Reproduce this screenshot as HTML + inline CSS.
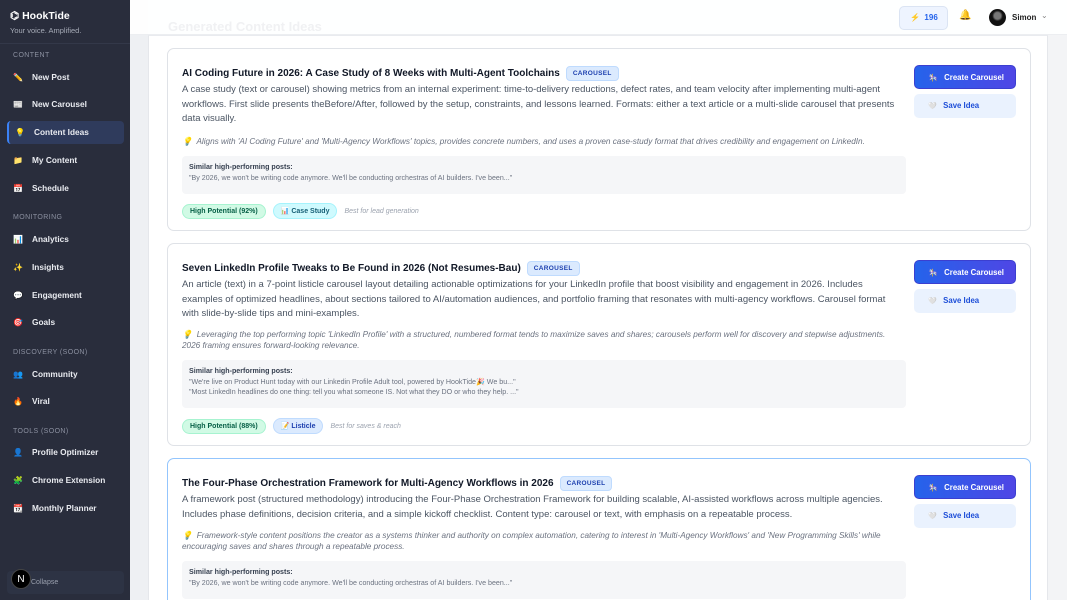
<!DOCTYPE html>
<html><head><meta charset="utf-8"><style>
*{box-sizing:border-box;margin:0;padding:0}
html,body{width:1067px;height:600px;overflow:hidden}
body{background:#f3f4f6;font-family:"Liberation Sans","Noto Sans CJK SC",sans-serif;position:relative}
#root{position:absolute;left:0;top:0;width:1067px;height:600px;overflow:hidden}
.sb{position:absolute;left:0;top:0;width:130px;height:600px;background:#292d3c;color:#e5e7eb}
.logo{position:absolute;left:10px;top:10px;font-weight:bold;font-size:10.5px;color:#fff}
.tag{position:absolute;left:10px;top:26px;font-size:7.5px;color:#a5aab6}
.sec{position:absolute;left:13px;font-size:7px;color:#8b90a0;letter-spacing:.4px}
.it{position:absolute;left:7px;width:117px;height:23px;font-size:8.3px;font-weight:bold;color:#e9ebf0;line-height:23px;padding-left:6px;border-radius:4px}
.it i{font-style:normal;display:inline-block;width:19px;font-size:8px}
.it.act{background:#2f3b5c;border-left:2px solid #3b82f6}
.strip{position:absolute;left:130px;top:0;width:18px;height:600px;background:#eef0f3}
.main{position:absolute;left:148px;top:35px;width:900px;height:565px;background:#fff;border-left:1px solid #e5e7eb;border-top:1px solid #e9ebef;border-right:1px solid #e5e7eb}
.hdr{position:absolute;left:130px;top:0;width:937px;height:35px;background:rgba(255,255,255,.92);border-bottom:1px solid #eceef1}
.ghost{position:absolute;left:168px;top:19px;font-size:13px;font-weight:bold;color:#f0f1f3}
.card{position:absolute;left:167px;width:864px;background:#fff;border:1px solid #dfe2e7;border-radius:7px}
.card.sel{border-color:#93c5fd}
.t{position:absolute;left:14px;top:17px;font-size:10px;font-weight:bold;color:#111827;white-space:nowrap}
.pill{display:inline-block;margin-left:6px;background:#dbeafe;color:#1e40af;font-size:6.5px;font-weight:bold;padding:3px 6px;border-radius:4px;border:1px solid #bfdbfe;vertical-align:1px;letter-spacing:.3px}
.d{position:absolute;left:14px;top:34px;width:720px;font-size:9.5px;line-height:14.6px;color:#4b5563;white-space:nowrap}
.r{position:absolute;left:14px;width:722px;font-size:8.2px;line-height:11.3px;color:#6b7280;font-style:italic}
.sim{position:absolute;left:14px;width:724px;background:#f5f6f8;border-radius:4px;padding:6px 7px;font-size:7.1px;line-height:10.5px;color:#6b7280}
.sim b{color:#374151;display:block}
.bd{position:absolute;left:14px;font-size:7px;white-space:nowrap}
.b{display:inline-block;padding:3px 7px;border-radius:8px;font-weight:bold;margin-right:7px}
.g{background:#d1fae5;color:#065f46;border:1px solid #a7f3d0}
.c{background:#cffafe;color:#155e75;border:1px solid #a5f3fc}
.bl{background:#dbeafe;color:#1e40af;border:1px solid #bfdbfe}
.bd em{color:#9ca3af}
.btn{position:absolute;left:746px;width:102px;height:24px;border-radius:5px;font-size:7.8px;font-weight:bold;line-height:24px;padding-left:14px}
.btn i{font-style:normal;font-size:7px;display:inline-block;width:13px}
.p{background:linear-gradient(90deg,#2563eb,#4f46e5);color:#fff;top:16px;border:1px solid #3b3fd0}
.s{background:#eaf2fe;color:#1d4ed8;top:45px;padding-left:14px}
</style></head><body><div id="root">
<div class="strip"></div>
<div class="main"></div>
<div class="hdr"></div>
<div class="ghost">Generated Content Ideas</div>
<div style="position:absolute;left:899px;top:6px;width:49px;height:24px;border:1px solid #dbe4f3;background:#eef4ff;border-radius:5px;font-size:8px;font-weight:bold;color:#2563eb;line-height:22px;padding-left:10px"><span style="color:#f59e0b">⚡</span>&nbsp; 196</div>
<div style="position:absolute;left:959px;top:10px;font-size:10px;color:#e0a500">🔔</div>
<div style="position:absolute;left:989px;top:9px;width:17px;height:17px;border-radius:50%;background:radial-gradient(circle at 50% 40%,#777 0 25%,#111 40%)"></div>
<div style="position:absolute;left:1012px;top:13px;font-size:8px;font-weight:bold;color:#222">Simon</div>
<div style="position:absolute;left:1041px;top:11px;font-size:8px;color:#888">⌄</div>

<div class="sb">
<div class="logo">⌬ HookTide</div>
<div class="tag">Your voice. Amplified.</div>
<div style="position:absolute;left:0;top:43px;width:130px;border-top:1px solid #333849"></div>
<div class="sec" style="top:52px">CONTENT</div>
<div class="it" style="top:66px"><i>✏️</i>New Post</div>
<div class="it" style="top:93px"><i>📰</i>New Carousel</div>
<div class="it act" style="top:121px"><i>💡</i>Content Ideas</div>
<div class="it" style="top:149px"><i>📁</i>My Content</div>
<div class="it" style="top:177px"><i>📅</i>Schedule</div>
<div class="sec" style="top:214px">MONITORING</div>
<div class="it" style="top:228px"><i>📊</i>Analytics</div>
<div class="it" style="top:256px"><i>✨</i>Insights</div>
<div class="it" style="top:284px"><i>💬</i>Engagement</div>
<div class="it" style="top:311px"><i>🎯</i>Goals</div>
<div class="sec" style="top:349px">DISCOVERY (SOON)</div>
<div class="it" style="top:363px"><i>👥</i>Community</div>
<div class="it" style="top:390px"><i>🔥</i>Viral</div>
<div class="sec" style="top:428px">TOOLS (SOON)</div>
<div class="it" style="top:441px"><i>👤</i>Profile Optimizer</div>
<div class="it" style="top:469px"><i>🧩</i>Chrome Extension</div>
<div class="it" style="top:497px"><i>📆</i>Monthly Planner</div>
<div style="position:absolute;left:7px;top:571px;width:117px;height:23px;background:#2d3344;border-radius:4px;font-size:7px;color:#9aa0ae;line-height:23px;padding-left:24px">Collapse</div>
<div style="position:absolute;left:11px;top:569px;width:20px;height:20px;border-radius:50%;background:#000;color:#fff;font-size:10px;text-align:center;line-height:20px;border:1px solid #444">N</div>
</div>

<div class="card" style="top:48px;height:183px">
<div class="t">AI Coding Future in 2026: A Case Study of 8 Weeks with Multi-Agent Toolchains<span class="pill">CAROUSEL</span></div>
<div class="d">A case study (text or carousel) showing metrics from an internal experiment: time-to-delivery reductions, defect rates, and team velocity after implementing multi-agent<br>workflows. First slide presents theBefore/After, followed by the setup, constraints, and lessons learned. Formats: either a text article or a multi-slide carousel that presents<br>data visually.</div>
<div class="r" style="top:87px">💡&nbsp; Aligns with 'AI Coding Future' and 'Multi-Agency Workflows' topics, provides concrete numbers, and uses a proven case-study format that drives credibility and engagement on LinkedIn.</div>
<div class="sim" style="top:107px;height:38px"><b>Similar high-performing posts:</b>"By 2026, we won't be writing code anymore. We'll be conducting orchestras of AI builders. I've been..."</div>
<div class="bd" style="top:154px"><span class="b g">High Potential (92%)</span><span class="b c">📊 Case Study</span><em>Best for lead generation</em></div>
<div class="btn p"><i>🎠</i> Create Carousel</div><div class="btn s"><i>🤍</i> Save Idea</div>
</div>

<div class="card" style="top:243px;height:203px">
<div class="t">Seven LinkedIn Profile Tweaks to Be Found in 2026 (Not Resumes-Bau)<span class="pill">CAROUSEL</span></div>
<div class="d">An article (text) in a 7-point listicle carousel layout detailing actionable optimizations for your LinkedIn profile that boost visibility and engagement in 2026. Includes<br>examples of optimized headlines, about sections tailored to AI/automation audiences, and portfolio framing that resonates with multi-agency workflows. Carousel format<br>with slide-by-slide tips and mini-examples.</div>
<div class="r" style="top:85px">💡&nbsp; Leveraging the top performing topic 'LinkedIn Profile' with a structured, numbered format tends to maximize saves and shares; carousels perform well for discovery and stepwise adjustments. 2026 framing ensures forward-looking relevance.</div>
<div class="sim" style="top:116px;height:48px"><b>Similar high-performing posts:</b>"We're live on Product Hunt today with our Linkedin Profile Adult tool, powered by HookTide🎉 We bu..."<br>"Most LinkedIn headlines do one thing: tell you what someone IS. Not what they DO or who they help. ..."</div>
<div class="bd" style="top:174px"><span class="b g">High Potential (88%)</span><span class="b bl">📝 Listicle</span><em>Best for saves &amp; reach</em></div>
<div class="btn p"><i>🎠</i> Create Carousel</div><div class="btn s"><i>🤍</i> Save Idea</div>
</div>

<div class="card sel" style="top:458px;height:160px">
<div class="t">The Four-Phase Orchestration Framework for Multi-Agency Workflows in 2026<span class="pill">CAROUSEL</span></div>
<div class="d">A framework post (structured methodology) introducing the Four-Phase Orchestration Framework for building scalable, AI-assisted workflows across multiple agencies.<br>Includes phase definitions, decision criteria, and a simple kickoff checklist. Content type: carousel or text, with emphasis on a repeatable process.</div>
<div class="r" style="top:71px">💡&nbsp; Framework-style content positions the creator as a systems thinker and authority on complex automation, catering to interest in 'Multi-Agency Workflows' and 'New Programming Skills' while encouraging saves and shares through a repeatable process.</div>
<div class="sim" style="top:102px;height:38px"><b>Similar high-performing posts:</b>"By 2026, we won't be writing code anymore. We'll be conducting orchestras of AI builders. I've been..."</div>
<div class="btn p"><i>🎠</i> Create Carousel</div><div class="btn s"><i>🤍</i> Save Idea</div>
</div>
</div></body></html>
